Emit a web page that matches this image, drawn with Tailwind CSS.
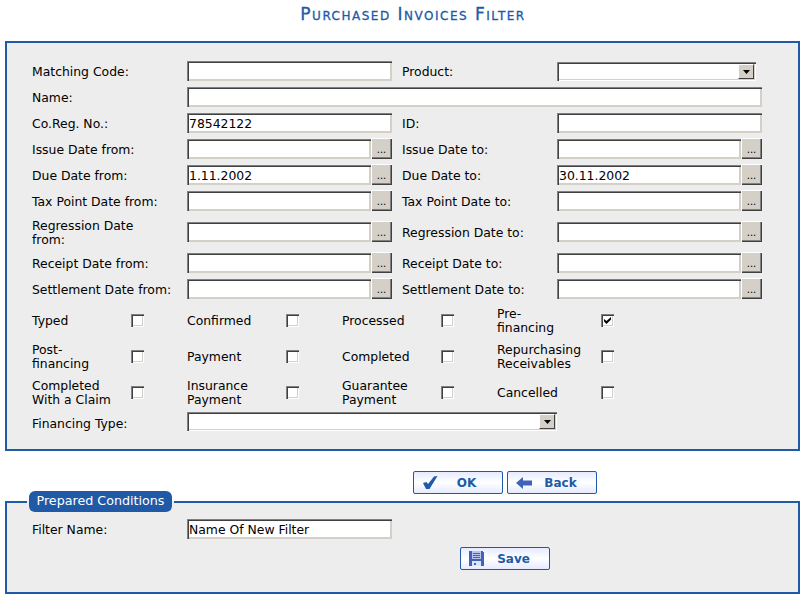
<!DOCTYPE html>
<html lang="en">
<head>
  <meta charset="UTF-8" />
  <title>Purchased Invoices Filter</title>
  <script src="https://cdn.jsdelivr.net/npm/@tailwindcss/browser@4"></script>
</head>
<body class="bg-white w-[807px] h-[601px] overflow-hidden font-['DejaVu_Sans',sans-serif] text-[12.4px] leading-[14px] text-black">

  <h1 class="h-[41px] pt-[4px] pl-[19px] text-center text-[17px] leading-[20px] font-normal tracking-[1.5px] text-[#205aa7] [font-variant:small-caps] [-webkit-text-stroke:0.3px_#205aa7]">Purchased Invoices Filter</h1>

  <form class="ml-[5px] w-[795px] h-[410px] border-2 border-[#205aa7] bg-[#ededed] pl-[25px] pt-[18px] flex flex-col gap-[6px]">
    <div class="grid grid-cols-[155px_205px_10px_155px_205px] h-[20px] items-center">
      <label class="pt-[2px]">Matching Code:</label>
      <input class="h-[20px] w-full px-[2px] bg-white shadow-[inset_1px_1px_0_#808080,inset_2px_2px_0_#404040,inset_-1px_-1px_0_#d4d0c8,inset_-2px_-2px_0_#d4d0c8]" />
      <span></span>
      <label class="pt-[2px]">Product:</label>
      <div class="relative self-start mt-px h-[19px] w-[199px] bg-white shadow-[inset_1px_1px_0_#808080,inset_2px_2px_0_#404040,inset_-1px_-1px_0_#fff,inset_-2px_-2px_0_#d4d0c8]">
        <span class="absolute right-[2px] top-[2px] w-[16px] h-[15px] flex items-center justify-center bg-[#d4d0c8] border border-t-white border-l-white border-r-[#404040] border-b-[#404040]">
          <svg width="7" height="4" viewBox="0 0 7 4"><path d="M0 0h7L3.500 4z" fill="#000"/></svg>
        </span>
      </div>
    </div>
    <div class="grid grid-cols-[155px_575px] h-[20px] items-center">
      <label class="pt-[2px]">Name:</label>
      <input class="h-[20px] w-full px-[2px] bg-white shadow-[inset_1px_1px_0_#808080,inset_2px_2px_0_#404040,inset_-1px_-1px_0_#d4d0c8,inset_-2px_-2px_0_#d4d0c8]" />
    </div>
    <div class="grid grid-cols-[155px_205px_10px_155px_205px] h-[20px] items-center">
      <label class="pt-[2px]">Co.Reg. No.:</label>
      <input value="78542122" class="h-[20px] w-full px-[2px] bg-white shadow-[inset_1px_1px_0_#808080,inset_2px_2px_0_#404040,inset_-1px_-1px_0_#d4d0c8,inset_-2px_-2px_0_#d4d0c8]" />
      <span></span>
      <label class="pt-[2px]">ID:</label>
      <input class="h-[20px] w-full px-[2px] bg-white shadow-[inset_1px_1px_0_#808080,inset_2px_2px_0_#404040,inset_-1px_-1px_0_#d4d0c8,inset_-2px_-2px_0_#d4d0c8]" />
    </div>

    <div class="grid grid-cols-[155px_205px_10px_155px_205px] h-[20px] items-center">
      <label class="pt-[2px]">Issue Date from:</label>
      <div class="flex">
        <input class="h-[20px] w-[184px] px-[2px] bg-white shadow-[inset_1px_1px_0_#808080,inset_2px_2px_0_#404040,inset_-1px_-1px_0_#d4d0c8,inset_-2px_-2px_0_#d4d0c8]" />
        <button type="button" class="w-[21px] h-[21px] -mt-px bg-[#d4d0c8] shadow-[inset_1px_1px_0_#fff,inset_-1px_-1px_0_#404040,inset_-2px_-2px_0_#808080] text-[10px] leading-[24px]">...</button>
      </div>
      <span></span>
      <label class="pt-[2px]">Issue Date to:</label>
      <div class="flex">
        <input class="h-[20px] w-[184px] px-[2px] bg-white shadow-[inset_1px_1px_0_#808080,inset_2px_2px_0_#404040,inset_-1px_-1px_0_#d4d0c8,inset_-2px_-2px_0_#d4d0c8]" />
        <button type="button" class="w-[21px] h-[21px] -mt-px bg-[#d4d0c8] shadow-[inset_1px_1px_0_#fff,inset_-1px_-1px_0_#404040,inset_-2px_-2px_0_#808080] text-[10px] leading-[24px]">...</button>
      </div>
    </div>
    <div class="grid grid-cols-[155px_205px_10px_155px_205px] h-[20px] items-center">
      <label class="pt-[2px]">Due Date from:</label>
      <div class="flex">
        <input value="1.11.2002" class="h-[20px] w-[184px] px-[2px] bg-white shadow-[inset_1px_1px_0_#808080,inset_2px_2px_0_#404040,inset_-1px_-1px_0_#d4d0c8,inset_-2px_-2px_0_#d4d0c8]" />
        <button type="button" class="w-[21px] h-[21px] -mt-px bg-[#d4d0c8] shadow-[inset_1px_1px_0_#fff,inset_-1px_-1px_0_#404040,inset_-2px_-2px_0_#808080] text-[10px] leading-[24px]">...</button>
      </div>
      <span></span>
      <label class="pt-[2px]">Due Date to:</label>
      <div class="flex">
        <input value="30.11.2002" class="h-[20px] w-[184px] px-[2px] bg-white shadow-[inset_1px_1px_0_#808080,inset_2px_2px_0_#404040,inset_-1px_-1px_0_#d4d0c8,inset_-2px_-2px_0_#d4d0c8]" />
        <button type="button" class="w-[21px] h-[21px] -mt-px bg-[#d4d0c8] shadow-[inset_1px_1px_0_#fff,inset_-1px_-1px_0_#404040,inset_-2px_-2px_0_#808080] text-[10px] leading-[24px]">...</button>
      </div>
    </div>
    <div class="grid grid-cols-[155px_205px_10px_155px_205px] h-[20px] items-center">
      <label class="pt-[2px]">Tax Point Date from:</label>
      <div class="flex">
        <input class="h-[20px] w-[184px] px-[2px] bg-white shadow-[inset_1px_1px_0_#808080,inset_2px_2px_0_#404040,inset_-1px_-1px_0_#d4d0c8,inset_-2px_-2px_0_#d4d0c8]" />
        <button type="button" class="w-[21px] h-[21px] -mt-px bg-[#d4d0c8] shadow-[inset_1px_1px_0_#fff,inset_-1px_-1px_0_#404040,inset_-2px_-2px_0_#808080] text-[10px] leading-[24px]">...</button>
      </div>
      <span></span>
      <label class="pt-[2px]">Tax Point Date to:</label>
      <div class="flex">
        <input class="h-[20px] w-[184px] px-[2px] bg-white shadow-[inset_1px_1px_0_#808080,inset_2px_2px_0_#404040,inset_-1px_-1px_0_#d4d0c8,inset_-2px_-2px_0_#d4d0c8]" />
        <button type="button" class="w-[21px] h-[21px] -mt-px bg-[#d4d0c8] shadow-[inset_1px_1px_0_#fff,inset_-1px_-1px_0_#404040,inset_-2px_-2px_0_#808080] text-[10px] leading-[24px]">...</button>
      </div>
    </div>
    <div class="grid grid-cols-[155px_205px_10px_155px_205px] h-[30px] items-center">
      <label class="pt-[2px] w-[120px]">Regression Date from:</label>
      <div class="flex">
        <input class="h-[20px] w-[184px] px-[2px] bg-white shadow-[inset_1px_1px_0_#808080,inset_2px_2px_0_#404040,inset_-1px_-1px_0_#d4d0c8,inset_-2px_-2px_0_#d4d0c8]" />
        <button type="button" class="w-[21px] h-[21px] -mt-px bg-[#d4d0c8] shadow-[inset_1px_1px_0_#fff,inset_-1px_-1px_0_#404040,inset_-2px_-2px_0_#808080] text-[10px] leading-[24px]">...</button>
      </div>
      <span></span>
      <label class="pt-[2px]">Regression Date to:</label>
      <div class="flex">
        <input class="h-[20px] w-[184px] px-[2px] bg-white shadow-[inset_1px_1px_0_#808080,inset_2px_2px_0_#404040,inset_-1px_-1px_0_#d4d0c8,inset_-2px_-2px_0_#d4d0c8]" />
        <button type="button" class="w-[21px] h-[21px] -mt-px bg-[#d4d0c8] shadow-[inset_1px_1px_0_#fff,inset_-1px_-1px_0_#404040,inset_-2px_-2px_0_#808080] text-[10px] leading-[24px]">...</button>
      </div>
    </div>
    <div class="grid grid-cols-[155px_205px_10px_155px_205px] h-[20px] items-center">
      <label class="pt-[2px]">Receipt Date from:</label>
      <div class="flex">
        <input class="h-[20px] w-[184px] px-[2px] bg-white shadow-[inset_1px_1px_0_#808080,inset_2px_2px_0_#404040,inset_-1px_-1px_0_#d4d0c8,inset_-2px_-2px_0_#d4d0c8]" />
        <button type="button" class="w-[21px] h-[21px] -mt-px bg-[#d4d0c8] shadow-[inset_1px_1px_0_#fff,inset_-1px_-1px_0_#404040,inset_-2px_-2px_0_#808080] text-[10px] leading-[24px]">...</button>
      </div>
      <span></span>
      <label class="pt-[2px]">Receipt Date to:</label>
      <div class="flex">
        <input class="h-[20px] w-[184px] px-[2px] bg-white shadow-[inset_1px_1px_0_#808080,inset_2px_2px_0_#404040,inset_-1px_-1px_0_#d4d0c8,inset_-2px_-2px_0_#d4d0c8]" />
        <button type="button" class="w-[21px] h-[21px] -mt-px bg-[#d4d0c8] shadow-[inset_1px_1px_0_#fff,inset_-1px_-1px_0_#404040,inset_-2px_-2px_0_#808080] text-[10px] leading-[24px]">...</button>
      </div>
    </div>
    <div class="grid grid-cols-[155px_205px_10px_155px_205px] h-[20px] items-center">
      <label class="pt-[2px]">Settlement Date from:</label>
      <div class="flex">
        <input class="h-[20px] w-[184px] px-[2px] bg-white shadow-[inset_1px_1px_0_#808080,inset_2px_2px_0_#404040,inset_-1px_-1px_0_#d4d0c8,inset_-2px_-2px_0_#d4d0c8]" />
        <button type="button" class="w-[21px] h-[21px] -mt-px bg-[#d4d0c8] shadow-[inset_1px_1px_0_#fff,inset_-1px_-1px_0_#404040,inset_-2px_-2px_0_#808080] text-[10px] leading-[24px]">...</button>
      </div>
      <span></span>
      <label class="pt-[2px]">Settlement Date to:</label>
      <div class="flex">
        <input class="h-[20px] w-[184px] px-[2px] bg-white shadow-[inset_1px_1px_0_#808080,inset_2px_2px_0_#404040,inset_-1px_-1px_0_#d4d0c8,inset_-2px_-2px_0_#d4d0c8]" />
        <button type="button" class="w-[21px] h-[21px] -mt-px bg-[#d4d0c8] shadow-[inset_1px_1px_0_#fff,inset_-1px_-1px_0_#404040,inset_-2px_-2px_0_#808080] text-[10px] leading-[24px]">...</button>
      </div>
    </div>

    <div class="grid grid-cols-[99px_56px_99px_56px_99px_56px_104px_13px] h-[30px] items-center">
      <label class="pt-[2px]">Typed</label>
      <span class="w-[13px] h-[13px] bg-white shadow-[inset_1px_1px_0_#808080,inset_2px_2px_0_#404040,inset_-1px_-1px_0_#fff,inset_-2px_-2px_0_#d4d0c8]"></span>
      <label class="pt-[2px]">Confirmed</label>
      <span class="w-[13px] h-[13px] bg-white shadow-[inset_1px_1px_0_#808080,inset_2px_2px_0_#404040,inset_-1px_-1px_0_#fff,inset_-2px_-2px_0_#d4d0c8]"></span>
      <label class="pt-[2px]">Processed</label>
      <span class="w-[13px] h-[13px] bg-white shadow-[inset_1px_1px_0_#808080,inset_2px_2px_0_#404040,inset_-1px_-1px_0_#fff,inset_-2px_-2px_0_#d4d0c8]"></span>
      <label class="pt-[2px] w-[90px]">Pre-<br />financing</label>
      <span class="w-[13px] h-[13px] bg-white flex items-center justify-center shadow-[inset_1px_1px_0_#808080,inset_2px_2px_0_#404040,inset_-1px_-1px_0_#fff,inset_-2px_-2px_0_#d4d0c8]">
        <svg width="7" height="7" viewBox="0 0 7 7"><path d="M0 2l2.500 2L7 0v2.500L2.500 7 0 4.500z" fill="#000"/></svg>
      </span>
    </div>
    <div class="grid grid-cols-[99px_56px_99px_56px_99px_56px_104px_13px] h-[30px] items-center">
      <label class="pt-[2px]">Post-<br />financing</label>
      <span class="w-[13px] h-[13px] bg-white shadow-[inset_1px_1px_0_#808080,inset_2px_2px_0_#404040,inset_-1px_-1px_0_#fff,inset_-2px_-2px_0_#d4d0c8]"></span>
      <label class="pt-[2px]">Payment</label>
      <span class="w-[13px] h-[13px] bg-white shadow-[inset_1px_1px_0_#808080,inset_2px_2px_0_#404040,inset_-1px_-1px_0_#fff,inset_-2px_-2px_0_#d4d0c8]"></span>
      <label class="pt-[2px]">Completed</label>
      <span class="w-[13px] h-[13px] bg-white shadow-[inset_1px_1px_0_#808080,inset_2px_2px_0_#404040,inset_-1px_-1px_0_#fff,inset_-2px_-2px_0_#d4d0c8]"></span>
      <label class="pt-[2px]">Repurchasing<br />Receivables</label>
      <span class="w-[13px] h-[13px] bg-white shadow-[inset_1px_1px_0_#808080,inset_2px_2px_0_#404040,inset_-1px_-1px_0_#fff,inset_-2px_-2px_0_#d4d0c8]"></span>
    </div>
    <div class="grid grid-cols-[99px_56px_99px_56px_99px_56px_104px_13px] h-[30px] items-center">
      <label class="pt-[2px]">Completed<br />With a Claim</label>
      <span class="w-[13px] h-[13px] bg-white shadow-[inset_1px_1px_0_#808080,inset_2px_2px_0_#404040,inset_-1px_-1px_0_#fff,inset_-2px_-2px_0_#d4d0c8]"></span>
      <label class="pt-[2px]">Insurance<br />Payment</label>
      <span class="w-[13px] h-[13px] bg-white shadow-[inset_1px_1px_0_#808080,inset_2px_2px_0_#404040,inset_-1px_-1px_0_#fff,inset_-2px_-2px_0_#d4d0c8]"></span>
      <label class="pt-[2px]">Guarantee<br />Payment</label>
      <span class="w-[13px] h-[13px] bg-white shadow-[inset_1px_1px_0_#808080,inset_2px_2px_0_#404040,inset_-1px_-1px_0_#fff,inset_-2px_-2px_0_#d4d0c8]"></span>
      <label class="pt-[2px]">Cancelled</label>
      <span class="w-[13px] h-[13px] bg-white shadow-[inset_1px_1px_0_#808080,inset_2px_2px_0_#404040,inset_-1px_-1px_0_#fff,inset_-2px_-2px_0_#d4d0c8]"></span>
    </div>
    <div class="grid grid-cols-[155px_370px] h-[20px] items-center">
      <label class="pt-[2px]">Financing Type:</label>
      <div class="relative self-start -mt-px h-[19px] bg-white shadow-[inset_1px_1px_0_#808080,inset_2px_2px_0_#404040,inset_-1px_-1px_0_#fff,inset_-2px_-2px_0_#d4d0c8]">
        <span class="absolute right-[2px] top-[2px] w-[16px] h-[15px] flex items-center justify-center bg-[#d4d0c8] border border-t-white border-l-white border-r-[#404040] border-b-[#404040]">
          <svg width="7" height="4" viewBox="0 0 7 4"><path d="M0 0h7L3.500 4z" fill="#000"/></svg>
        </span>
      </div>
    </div>
  </form>

  <div class="mt-[20px] ml-[413px] flex gap-[4px] h-[23px]">
    <button type="button" class="relative w-[90px] h-[23px] rounded-[2px] border border-[#205aa7] bg-gradient-to-b from-[#e6eaff] via-white to-[#e6eaff] text-[12px] font-bold text-[#205aa7] pl-[17px]">
      <svg class="absolute left-[9px] top-[4px]" width="15" height="13" viewBox="0 0 15 13"><path d="M0 7l3.500-1L5 8l6-7.500L14.500 0l-8 13H3z" fill="#205aa7"/></svg>
      OK
    </button>
    <button type="button" class="relative w-[90px] h-[23px] rounded-[2px] border border-[#205aa7] bg-gradient-to-b from-[#e6eaff] via-white to-[#e6eaff] text-[12px] font-bold text-[#205aa7] pl-[17px]">
      <svg class="absolute left-[8px] top-[5px]" width="16" height="12" viewBox="0 0 16 12"><path d="M0 6l7-6v3.500h9v5H7V12z" fill="#3f63b8"/></svg>
      Back
    </button>
  </div>

  <fieldset class="ml-[5px] -mt-[3px] w-[795px] h-[103px] border-2 border-[#205aa7] bg-[#ededed]">
    <legend class="ml-[20px] px-[2px]">
      <span class="block w-[143px] h-[21px] text-center rounded-[6px] bg-[#205aa7] text-[12.7px] text-white leading-[20px]">Prepared Conditions</span>
    </legend>
    <div class="grid grid-cols-[155px_205px] h-[20px] items-center mt-[7px] ml-[25px]">
      <label class="pt-[2px]">Filter Name:</label>
      <input value="Name Of New Filter" class="h-[20px] w-full px-[2px] bg-white shadow-[inset_1px_1px_0_#808080,inset_2px_2px_0_#404040,inset_-1px_-1px_0_#d4d0c8,inset_-2px_-2px_0_#d4d0c8]" />
    </div>
    <button type="button" class="relative block mt-[8px] ml-[453px] w-[90px] h-[23px] rounded-[2px] border border-[#205aa7] bg-gradient-to-b from-[#e6eaff] via-white to-[#e6eaff] text-[12px] font-bold text-[#205aa7] pl-[17px]">
      <svg class="absolute left-[8px] top-[3px]" width="15" height="15" viewBox="0 0 15 15"><path d="M0 0h15v15H0z" fill="#3f63b8"/><path d="M14 0h1v1h-1z" fill="#fff"/><path d="M3 0h9v8H3z" fill="#b9c4ee"/><path d="M4 2h7v1H4zM4 4h7v1H4zM4 6h7v1H4z" fill="#3f63b8"/><path d="M3 10h9v5H3z" fill="#dfe4f5"/><path d="M5 12h2v2H5z" fill="#3f63b8"/></svg>
      Save
    </button>
  </fieldset>

</body>
</html>
